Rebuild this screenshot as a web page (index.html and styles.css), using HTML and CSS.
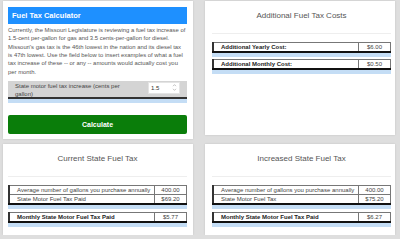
FILE: index.html
```html
<!DOCTYPE html>
<html lang="en">
<head>
<meta charset="utf-8">
<title>Fuel Tax Calculator</title>
<link rel="stylesheet" href="styles.css">
</head>
<body>
<div class="page">
  <section class="card card-l calc">
    <h1 class="calc-title">Fuel Tax Calculator</h1>
    <p class="intro">Currently, the Missouri Legislature is reviewing a fuel tax increase of<br>1.5-cent per-gallon for gas and 3.5 cents-per-gallon for diesel.<br>Missouri's gas tax is the 46th lowest in the nation and its diesel tax<br>is 47th lowest. Use the field below to insert examples of what a fuel<br>tax increase of these -- or any -- amounts would actually cost you<br>per month.</p>
    <div class="field">
      <label class="field-label" for="inc">State motor fuel tax increase (cents per gallon)</label>
      <div class="num">
        <input id="inc" class="num-input" type="text" value="1.5">
        <svg class="spin" width="5" height="9" viewBox="0 0 5 9"><path d="M1 3.2 L2.5 1.6 L4 3.2 M1 5.8 L2.5 7.4 L4 5.8" fill="none" stroke="#b5b5b5" stroke-width="0.8"/></svg>
      </div>
    </div>
    <button class="calc-btn" type="button">Calculate</button>
  </section>

  <section class="card card-r result result-top">
    <h2 class="card-title">Additional Fuel Tax Costs</h2>
    <hr class="rule">
    <div class="tbl">
      <table>
        <tr><td class="strong">Additional Yearly Cost:</td><td class="val">$6.00</td></tr>
      </table>
    </div>
    <div class="tbl">
      <table>
        <tr><td class="strong">Additional Monthly Cost:</td><td class="val">$0.50</td></tr>
      </table>
    </div>
  </section>

  <section class="card card-l result">
    <h2 class="card-title">Current State Fuel Tax</h2>
    <hr class="rule">
    <div class="tbl">
      <table>
        <tr><td>Average number of gallons you purchase annually</td><td class="val">400.00</td></tr>
        <tr><td>State Motor Fuel Tax Paid</td><td class="val">$69.20</td></tr>
      </table>
    </div>
    <div class="tbl tbl-gap">
      <table>
        <tr><td class="strong">Monthly State Motor Fuel Tax Paid</td><td class="val">$5.77</td></tr>
      </table>
    </div>
  </section>

  <section class="card card-r result">
    <h2 class="card-title">Increased State Fuel Tax</h2>
    <hr class="rule">
    <div class="tbl">
      <table>
        <tr><td>Average number of gallons you purchase annually</td><td class="val">400.00</td></tr>
        <tr><td>State Motor Fuel Tax</td><td class="val">$75.20</td></tr>
      </table>
    </div>
    <div class="tbl tbl-gap">
      <table>
        <tr><td class="strong">Monthly State Motor Fuel Tax Paid</td><td class="val">$6.27</td></tr>
      </table>
    </div>
  </section>
</div>
</body>
</html>
```

FILE: styles.css
```css
body {
  margin: 0;
  background: #dedede;
  font-family: "Liberation Sans", Arial, sans-serif;
  color: #444;
}

.page {
  display: grid;
  grid-template-columns: 190px 190px;
  column-gap: 12px;
  row-gap: 5px;
  padding: 1px 0 0 3px;
  align-items: start;
}

.card {
  background: #fff;
  box-sizing: border-box;
  box-shadow: 0 0 2px rgba(0, 0, 0, 0.12);
}

.card-l {
  padding-left: 5px;
  padding-right: 6px;
}

.card-r {
  padding-left: 7px;
  padding-right: 4px;
}

/* calculator card */
.calc {
  height: 138px;
  padding-top: 6px;
}

.calc-title {
  margin: 0 0 2px;
  height: 17px;
  padding-left: 4px;
  background: #1e90ff;
  color: #fff;
  font-size: 7.5px;
  font-weight: bold;
  line-height: 17px;
}

.intro {
  margin: 0;
  font-size: 5.9px;
  line-height: 8.33px;
  color: #555;
  white-space: nowrap;
}

.field {
  display: flex;
  justify-content: space-between;
  align-items: flex-start;
  height: 18px;
  margin-top: 5px;
  padding: 1px 7px 0;
  box-sizing: border-box;
  background: #d4d4d4;
  border-bottom: 2px solid #333;
  box-shadow: 0 4px 0 #c4ddf5;
}

.field-label {
  width: 112px;
  font-size: 6px;
  line-height: 8px;
  color: #444;
}

.num {
  display: flex;
  align-items: center;
  width: 32px;
  height: 12px;
  box-sizing: border-box;
  background: #fff;
  border: 1px solid #e4e4e4;
}

.num-input {
  width: 20px;
  padding: 0 0 0 2px;
  border: 0;
  background: transparent;
  font: 6px "Liberation Sans", Arial, sans-serif;
  color: #333;
  outline: none;
}

.spin {
  margin-left: auto;
  margin-right: 2px;
}

.calc-btn {
  display: block;
  width: 100%;
  height: 19px;
  margin-top: 16px;
  padding: 0;
  border: 0;
  border-radius: 2px;
  background: #0a7d0a;
  color: #fff;
  font: bold 7px "Liberation Sans", Arial, sans-serif;
}

/* result cards */
.result {
  padding-top: 10px;
  padding-bottom: 8px;
}

.result-top {
  height: 134px;
}

.card-title {
  margin: 0;
  font-size: 8px;
  font-weight: normal;
  line-height: 10px;
  text-align: center;
  color: #555;
}

.rule {
  margin: 12px 0 0;
  border: 0;
  border-top: 1px solid #eee;
}

.tbl {
  margin-top: 8px;
  padding-bottom: 4px;
  background: #c4ddf5;
}

.tbl + .tbl {
  margin-top: 2px;
}

.tbl-gap.tbl-gap {
  margin-top: 3px;
}

table {
  width: 100%;
  border-collapse: collapse;
  background: #fff;
}

td {
  height: 8px;
  padding: 0 0 0 7px;
  border: 1px solid #777;
  font-size: 6px;
  line-height: 8px;
  color: #444;
  white-space: nowrap;
}

td:first-child {
  border-left: 2px solid #333;
}

tr:last-child td {
  border-bottom: 2px solid #111;
}

td.val {
  width: 31px;
  padding: 0;
  text-align: center;
}

td.strong {
  font-weight: bold;
  color: #222;
}
```
